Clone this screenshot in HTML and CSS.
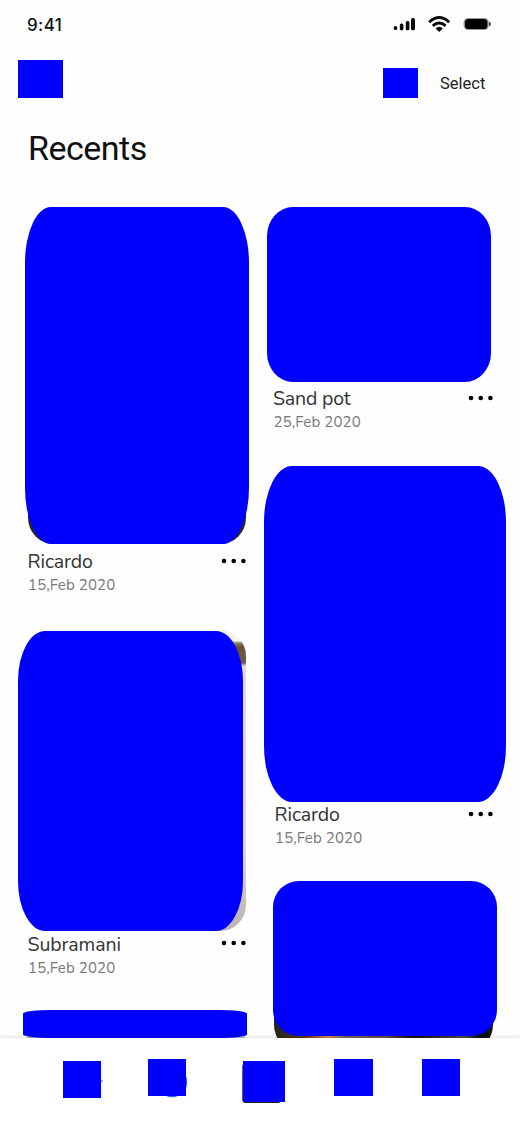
FILE: index.html
```html
<!DOCTYPE html>
<html lang="en">
<head>
<meta charset="utf-8">
<title>Recents</title>
<link rel="stylesheet" href="styles.css">
</head>
<body>
<div class="screen">
  <div class="status">
    <span class="time">9:41</span>
    <svg class="signals" width="100" height="20" viewBox="0 0 100 20" fill="#0a0a0a">
      <rect x="1.8" y="12" width="3.4" height="4" rx="1.5"/><rect x="7.8" y="9.5" width="3.6" height="6.7" rx="1.5"/><rect x="13.8" y="7" width="3.6" height="9.2" rx="1.5"/><rect x="19" y="4" width="4" height="12.2" rx="1.5"/>
      <g fill="none" stroke="#0a0a0a" stroke-width="2.9"><path d="M37.2 8.2Q47.2-1 57.2 8.2"/><path d="M40.8 11.8Q47.2 6.2 53.6 11.8"/></g>
      <path d="M43.6 14.4Q47.2 11.3 50.8 14.4L47.2 18Z"/>
      <rect x="71.6" y="3.9" width="25.2" height="12.2" rx="4.5" fill="#999"/><rect x="73" y="5" width="22.4" height="10" rx="3.6" fill="#000"/><path d="M97 7.4Q101.5 10 97 12.6Z" fill="#555"/>
    </svg>
  </div>
  <header class="toolbar">
    <span class="block back"></span>
    <span class="block action"></span>
    <span class="select">Select</span>
  </header>
  <h1>Recents</h1>
  <main class="gallery">
    <div class="column left">
      <article class="card">
        <div class="frame tall"><div class="photo dark"></div><div class="cover"></div></div>
        <div class="info"><h2>Ricardo</h2><svg class="dots" width="26" height="6"><circle cx="3" cy="3" r="2.3"/><circle cx="12.7" cy="3" r="2.3"/><circle cx="22.4" cy="3" r="2.3"/></svg></div>
        <p>15,Feb 2020</p>
      </article>
      <article class="card">
        <div class="frame beach"><div class="photo sand"></div><div class="cover"></div></div>
        <div class="info"><h2>Subramani</h2><svg class="dots" width="26" height="6"><circle cx="3" cy="3" r="2.3"/><circle cx="12.7" cy="3" r="2.3"/><circle cx="22.4" cy="3" r="2.3"/></svg></div>
        <p>15,Feb 2020</p>
      </article>
      <article class="card"><div class="frame strip"><div class="photo grey"></div><div class="cover"></div></div></article>
    </div>
    <div class="column right">
      <article class="card first">
        <div class="frame pot"><div class="cover"></div></div>
        <div class="info"><h2>Sand pot</h2><svg class="dots" width="26" height="6"><circle cx="3" cy="3" r="2.3"/><circle cx="12.7" cy="3" r="2.3"/><circle cx="22.4" cy="3" r="2.3"/></svg></div>
        <p>25,Feb 2020</p>
      </article>
      <article class="card second">
        <div class="frame portrait"><div class="cover"></div></div>
        <div class="info"><h2>Ricardo</h2><svg class="dots" width="26" height="6"><circle cx="3" cy="3" r="2.3"/><circle cx="12.7" cy="3" r="2.3"/><circle cx="22.4" cy="3" r="2.3"/></svg></div>
        <p>15,Feb 2020</p>
      </article>
      <article class="card"><div class="frame night"><div class="photo ember"></div><div class="cover"></div></div></article>
    </div>
  </main>
  <nav class="tabs">
    <svg width="520" height="87" viewBox="0 0 520 87">
      <path d="M101 42.3h1.7v1.5H101z" fill="#777"/><rect x="63" y="23" width="38" height="37" fill="#00f"/>
      <circle cx="172" cy="44" r="15.2" fill="#2464ff"/><rect x="148" y="21" width="38" height="37" fill="#00f"/>
      <rect x="242.3" y="25" width="39" height="40" rx="3.5" fill="#222"/><rect x="243" y="23" width="42" height="41" fill="#00f"/>
      <rect x="334" y="21" width="39" height="37" fill="#00f"/><rect x="422" y="21" width="38" height="37" fill="#00f"/>
    </svg>
  </nav>
</div>
</body>
</html>
```
FILE: styles.css
```css
* { box-sizing: border-box; margin: 0; padding: 0; }
body { background: #fefefe; font-family: Roboto, sans-serif; color: #111; }
.screen { width: 520px; height: 1125px; overflow: hidden; display: flex; flex-direction: column; background: #fefefe; }
.status { height: 60px; flex: none; display: flex; justify-content: space-between; padding: 14px 28px 0 27px; }
.time { font: 500 17px/22px Inter, sans-serif; letter-spacing: .4px; }
.signals { display: block; }
.toolbar { height: 60px; flex: none; display: flex; align-items: flex-start; padding-left: 18px; }
.block { background: #00f; }
.back { width: 45px; height: 38px; }
.action { width: 35px; height: 30px; margin: 8px 0 0 320px; }
.select { font-size: 16.5px; line-height: 20px; margin: 14px 0 0 22px; color: #222; }
h1 { height: 87px; flex: none; font-size: 34px; font-weight: 400; line-height: 40px; padding: 8px 0 0 28px; letter-spacing: -.5px; }
.gallery { height: 831px; flex: none; display: grid; grid-template-columns: 260px 260px; overflow: hidden; }
.frame { display: grid; }
.photo, .cover { grid-area: 1 / 1; }
.cover { background: #00f; }
.photo { border-radius: 26px; }
.tall { height: 337px; }
.tall .photo { margin: 280px 14.5px 0 27.5px; border-radius: 0 0 26px 26px; background: linear-gradient(transparent 24px, #29271f 28px); }
.tall .cover { margin: 0 11px 0 25px; border-radius: 26px / 56px; }
.beach { height: 301px; }
.beach .photo { margin: 0 14.5px 0 28px; background: linear-gradient(#f0f2f6 11px, #83845e 13px, #655038 17px, #725d46 33px, #e7dcd8 36px, #e5dad4 220px, #b8b1af); }
.beach .cover { margin: 1px 17px 0 18px; border-radius: 27px / 50px; }
.strip { height: 28px; }
.strip .photo { margin: 10px 15px 0 27px; background: #bbb; border-radius: 0; }
.strip .cover { margin: 0 13px 0 23px; border-radius: 29px / 3.5px; }
.pot { height: 175px; }
.pot .cover { margin: 0 29px 0 7px; border-radius: 26px / 29px; }
.portrait { height: 336px; }
.portrait .cover { margin: 0 14px 0 4px; border-radius: 28px / 56px; }
.night { height: 161px; }
.night .photo { margin: 20px 27.5px -9px 14px; background: linear-gradient(90deg, #222 0, #5a3514 30px, #d18b3d 54px, #77655a 72px, #665445 110px, #111 140px, #554e48 190px, #111 205px); }
.night .cover { margin: 0 23px 6px 13px; border-radius: 26px; }
.info { height: 30px; display: flex; justify-content: space-between; }
.left .info { padding: 5px 13px 0 27.5px; }
.left .card { height: 423px; }
.left .card + .card { height: 380px; }
.left .card + .card .info { height: 26px; padding-top: 1px; }
.left .card + .card .dots { margin-top: 8px; }
.right .info { padding: 4px 26px 0 13px; }
.right .second .info { padding: 0 26px 0 14.5px; }
h2 { font: 400 19.5px/26px "Nunito", "Noto Sans", sans-serif; letter-spacing: -.08px; color: #333; white-space: nowrap; }
.first h2 { letter-spacing: -.15px; }
.dots { display: block; margin-top: 8.5px; fill: #000; }
p { font: 400 15px/20px "Nunito", "Noto Sans", sans-serif; letter-spacing: .13px; color: #777; }
.left p { padding-left: 28px; margin-top: 1px; }
.right p { padding-left: 13.5px; }
.right .second p { padding-left: 15px; margin-top: -4px; }
.right .first { height: 259px; }
.right .second { height: 415px; }
.tabs { height: 87px; flex: none; background: #fff; box-shadow: 0 -1px 4px #0002; position: relative; }
.tabs svg { display: block; }
```
